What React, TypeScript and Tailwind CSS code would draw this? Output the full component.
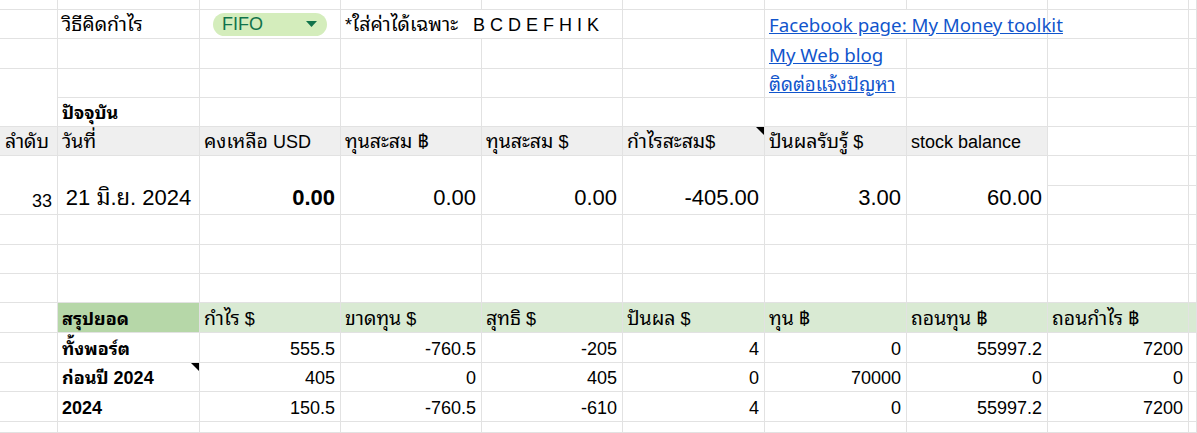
import React from "react";

const B = "border-r border-b border-[#e2e2e2]";
const base = `${B} relative flex items-end whitespace-nowrap leading-[20px] pb-[3px]`;
const L = `${base} justify-start pl-[4px]`;
const R = `${base} justify-end pr-[5px]`;
const LINK = "font-[family-name:'Noto_Sans','Noto_Sans_Thai_Looped','Loma','Garuda','Noto_Sans_Thai',sans-serif] text-[18.7px] text-[#1155cc] underline";

function Th({ s }: { s: string }) {
  const parts = s.split(/([\u0E00-\u0E7F]+)/);
  return (
    <span className="whitespace-pre">
      {parts.map((p, i) =>
        /[\u0E00-\u0E7F]/.test(p) ? (
          <span key={i} className="text-[1.08em]">{p}</span>
        ) : (
          <React.Fragment key={i}>{p}</React.Fragment>
        )
      )}
    </span>
  );
}

function Empty({ n = 1 }: { n?: number }) {
  return (
    <>
      {Array.from({ length: n }).map((_, i) => (
        <div key={i} className={B} />
      ))}
    </>
  );
}

function Tri() {
  return (
    <div className="absolute top-0 right-0 w-0 h-0 border-l-[8px] border-l-transparent border-t-[8px] border-t-black" />
  );
}

const bigHead = ["ลำดับ", "วันที่", "คงเหลือ USD", "ทุนสะสม ฿", "ทุนสะสม $", "กำไรสะสม$", "ปันผลรับรู้ $", "stock balance"];
const greenHead = ["กำไร $", "ขาดทุน $", "สุทธิ $", "ปันผล $", "ทุน ฿", "ถอนทุน ฿", "ถอนกำไร ฿"];
const summary: { label: string; vals: string[]; tri?: boolean }[] = [
  { label: "ทั้งพอร์ต", vals: ["555.5", "-760.5", "-205", "4", "0", "55997.2", "7200"] },
  { label: "ก่อนปี 2024", vals: ["405", "0", "405", "0", "70000", "0", "0"], tri: true },
  { label: "2024", vals: ["150.5", "-760.5", "-610", "4", "0", "55997.2", "7200"] },
];

export default function App() {
  return (
    <div className="w-[1197px] h-[433px] overflow-hidden bg-white text-black text-[18px] font-[family-name:'Liberation_Sans','Noto_Sans_Thai_Looped','Loma','Garuda','Noto_Sans_Thai','Noto_Sans',sans-serif]">
      <div className="grid grid-cols-[58px_142px_141px_141px_141px_142px_142px_141px_141px_1fr] grid-rows-[10px_29px_30px_29px_29px_29px_30px_29px_30px_29px_29px_30px_30px_29px_30px_11px]">
        {/* row 0 */}
        <Empty n={10} />
        {/* row 1 */}
        <Empty />
        <div className={L}><Th s="วิธีคิดกำไร" /></div>
        <div className={`${B} flex items-center`}>
          <div className="ml-[13px] w-[114px] h-[23px] rounded-full bg-[#d4edbc] flex items-center justify-between pl-[9px] pr-[10px] text-[#11734b] leading-[20px]">
            <span>FIFO</span>
            <svg width="11" height="6" viewBox="0 0 11 6"><path d="M0 0h11L5.5 6z" fill="#11734b" /></svg>
          </div>
        </div>
        <div className={`${L} col-span-2 pl-[3px]`}><Th s="*ใส่ค่าได้เฉพาะ   B C D E F H I K" /></div>
        <Empty />
        <div className={`${L} col-span-2 ${LINK}`}>Facebook page: My Money toolkit</div>
        <Empty n={2} />
        {/* row 2 */}
        <Empty n={6} />
        <div className={`${L} ${LINK}`}>My Web blog</div>
        <Empty n={3} />
        {/* row 3 */}
        <div className={`${B} row-span-2`} />
        <Empty n={5} />
        <div className={`${L} ${LINK}`}>ติดต่อแจ้งปัญหา</div>
        <Empty n={3} />
        {/* row 4 */}
        <div className={`${L} font-bold`}>ปัจจุบัน</div>
        <Empty n={8} />
        {/* row 5 header */}
        {bigHead.map((h, i) => (
          <div key={i} className={`${L} bg-[#efefef] border-[#dcdcdc] ${i === 0 ? "pl-[5px]" : ""}`}>
            <Th s={h} />
            {i === 5 && <Tri />}
          </div>
        ))}
        <Empty n={2} />
        {/* row 6-7 big values */}
        <div className={`${R} row-span-2`}>33</div>
        <div className={`${base} row-span-2 justify-center text-[22px] leading-[24px] pb-[4px]`}>21 มิ.ย. 2024</div>
        <div className={`${R} row-span-2 text-[22px] leading-[24px] pb-[4px] font-bold`}>0.00</div>
        <div className={`${R} row-span-2 text-[22px] leading-[24px] pb-[4px]`}>0.00</div>
        <div className={`${R} row-span-2 text-[22px] leading-[24px] pb-[4px]`}>0.00</div>
        <div className={`${R} row-span-2 text-[22px] leading-[24px] pb-[4px]`}>-405.00</div>
        <div className={`${R} row-span-2 text-[22px] leading-[24px] pb-[4px]`}>3.00</div>
        <div className={`${R} row-span-2 text-[22px] leading-[24px] pb-[4px]`}>60.00</div>
        <Empty n={2} />
        {/* row 7 */}
        <Empty n={2} />
        {/* rows 8-10 */}
        <Empty n={30} />
        {/* row 11 green header */}
        <Empty />
        <div className={`${L} bg-[#b6d7a8] font-bold`}>สรุปยอด</div>
        {greenHead.map((h, i) => (
          <div key={i} className={`${L} bg-[#d9ead3]`}><Th s={h} /></div>
        ))}
        <div className={`${B} bg-[#d9ead3]`} />
        {/* rows 12-14 */}
        {summary.map((r, ri) => (
          <React.Fragment key={ri}>
            <Empty />
            <div className={`${L} font-bold`}>
              {r.label}
              {r.tri && <Tri />}
            </div>
            {r.vals.map((v, vi) => (
              <div key={vi} className={R}>{v}</div>
            ))}
            <Empty />
          </React.Fragment>
        ))}
        {/* row 15 */}
        <Empty n={10} />
      </div>
    </div>
  );
}
